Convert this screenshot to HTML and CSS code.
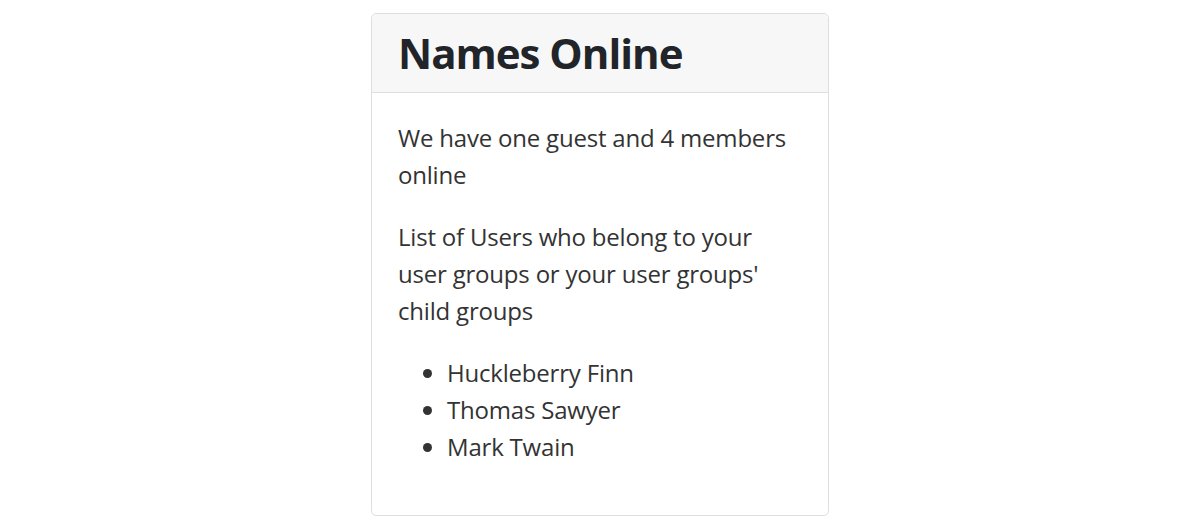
FILE: index.html
```html
<!DOCTYPE html>
<html>
<head>
<meta charset="utf-8">
<link rel="stylesheet" href="styles.css">
</head>
<body>
<div class="page">
  <div class="card">
    <div class="card-header">
      <h3 class="title">Names Online</h3>
    </div>
    <div class="card-body">
      <p>We have one guest and 4 members online</p>
      <p>List of Users who belong to your user groups or your user groups' child groups</p>
      <ul class="names">
        <li>Huckleberry Finn</li>
        <li>Thomas Sawyer</li>
        <li>Mark Twain</li>
      </ul>
    </div>
  </div>
</div>
</body>
</html>
```
FILE: styles.css
```css
html, body {
  margin: 0;
  padding: 0;
  background: #ffffff;
}
body {
  font-family: "Open Sans", "Noto Sans", sans-serif;
  color: #333333;
}
.page {
  display: flex;
  justify-content: center;
  padding-top: 13px;
}
.card {
  width: 456px;
  border: 1px solid #dedede;
  border-radius: 5px;
  overflow: hidden;
  background: #fff;
}
.card-header {
  background: #f7f7f7;
  border-bottom: 1px solid #dedede;
  padding: 14px 26px 14px;
}
.title {
  margin: 0;
  font-size: 42px;
  line-height: 50px;
  font-weight: 700;
  letter-spacing: -1px;
  color: #212529;
}
.card-body {
  padding: 26px 26px 26px;
  font-size: 24px;
  line-height: 37px;
  letter-spacing: -0.2px;
}
.card-body p {
  margin: 0 0 25px;
}
.names {
  margin: 0 0 24px;
  padding-left: 49px;
}
```
